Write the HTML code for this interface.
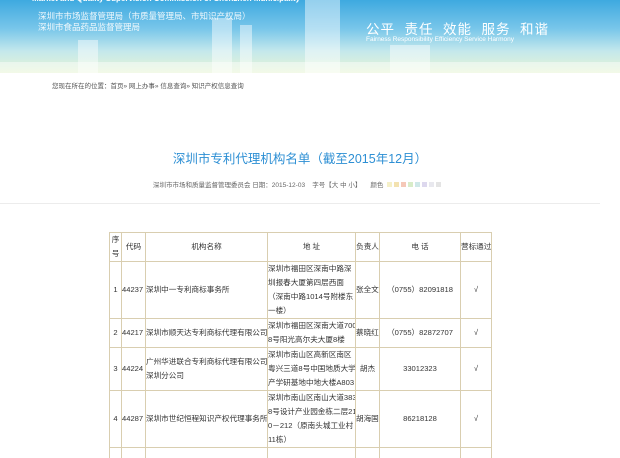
<!DOCTYPE html>
<html><head><meta charset="utf-8"><style>
*{margin:0;padding:0;box-sizing:border-box}
html,body{width:620px;height:458px;overflow:hidden}
body{background:#fff;font-family:"Liberation Sans","Noto Sans CJK SC",sans-serif;position:relative}
.hd{position:absolute;left:0;top:0;width:620px;height:73px;background:linear-gradient(180deg,#3ea9e0 0%,#7ac7ea 40%,#c4e8ec 70%,#e8f5d4 100%);overflow:hidden}
.hd .b{position:absolute;background:rgba(255,255,255,.45)}
.t0{position:absolute;left:32px;top:-6px;color:#fff;font-size:8px;font-weight:bold;white-space:nowrap}
.t1{position:absolute;left:38px;top:11px;color:#fff;font-size:8.5px;line-height:11px;opacity:.9;white-space:nowrap}
.t2{position:absolute;left:366px;top:18px;color:#fff;font-size:13.5px;letter-spacing:1px;white-space:nowrap}
.t3{position:absolute;left:366px;top:36px;color:#fff;font-size:6.5px;white-space:nowrap}
.bc{position:absolute;left:52px;top:80px;font-size:6.5px;color:#555;white-space:nowrap}
.title{position:absolute;left:0;width:600px;top:148px;text-align:center;font-size:12.5px;color:#2d8fd4}
.meta{position:absolute;left:153px;top:179px;font-size:6.5px;color:#666;white-space:nowrap}
.sw{display:inline-block;width:5px;height:5px;margin-right:2px}
.sep{position:absolute;left:0;top:203px;width:600px;height:1px;background:#ececec}
table{position:absolute;left:109px;top:232px;width:382px;table-layout:fixed;border-collapse:collapse;font-size:7.6px;color:#333}
td{border:1px solid #d9ceb0;line-height:14px;vertical-align:middle;padding:0;overflow:hidden;white-space:nowrap}
.c{text-align:center}
</style></head><body>
<div class="hd">
<div class="b" style="left:305px;top:0;width:35px;height:73px"></div>
<div class="b" style="left:212px;top:18px;width:20px;height:55px"></div>
<div class="b" style="left:240px;top:25px;width:12px;height:48px"></div>
<div class="b" style="left:78px;top:40px;width:20px;height:33px"></div>
<div class="b" style="left:390px;top:45px;width:40px;height:28px"></div>
<div class="b" style="left:0;top:62px;width:620px;height:11px"></div>
<div class="t0">Market and Quality Supervision Commission of Shenzhen Municipality</div>
<div class="t1">深圳市市场监督管理局（市质量管理局、市知识产权局）<br>深圳市食品药品监督管理局</div>
<div class="t2">公平 &nbsp;责任 &nbsp;效能 &nbsp;服务 &nbsp;和谐</div>
<div class="t3">Fairness Responsibility Efficiency Service Harmony</div>
</div>
<div class="bc">您现在所在的位置：首页» 网上办事» 信息查询» 知识产权信息查询</div>
<div class="title">深圳市专利代理机构名单（截至2015年12月）</div>
<div class="meta">深圳市市场和质量监督管理委员会 日期：2015-12-03 &nbsp;&nbsp; 字号【大 中 小】 &nbsp;&nbsp;&nbsp; 颜色 &nbsp;<span class="sw" style="background:#f5f0c8"></span><span class="sw" style="background:#f3e2b0"></span><span class="sw" style="background:#f5c8b8"></span><span class="sw" style="background:#d8ecc8"></span><span class="sw" style="background:#cfe8e8"></span><span class="sw" style="background:#ddd8ee"></span><span class="sw" style="background:#e8e8ee"></span><span class="sw" style="background:#e4e4e4"></span></div>
<div class="sep"></div>
<table>
<colgroup><col style="width:12px"><col style="width:24px"><col style="width:122px"><col style="width:88px"><col style="width:24px"><col style="width:81px"><col style="width:31px"></colgroup>
<tr style="height:29px"><td class="c">序<br>号</td><td class="c">代码</td><td class="c">机构名称</td><td class="c">地 址</td><td class="c">负责人</td><td class="c">电 话</td><td class="c">营标通过</td></tr>
<tr style="height:56px"><td class="c">1</td><td>44237</td><td>深圳中一专利商标事务所</td><td>深圳市福田区深南中路深<br>圳报春大厦第四层西面<br>（深南中路1014号附楼东<br>一楼）</td><td>张全文</td><td class="c">（0755）82091818</td><td class="c">√</td></tr>
<tr style="height:28px"><td class="c">2</td><td>44217</td><td>深圳市顺天达专利商标代理有限公司</td><td>深圳市福田区深南大道700<br>8号阳光高尔夫大厦8楼</td><td>蔡晓红</td><td class="c">（0755）82872707</td><td class="c">√</td></tr>
<tr style="height:43px"><td class="c">3</td><td>44224</td><td>广州华进联合专利商标代理有限公司<br>深圳分公司</td><td>深圳市南山区高新区南区<br>粤兴三道8号中国地质大学<br>产学研基地中地大楼A803</td><td class="c">胡杰</td><td class="c">33012323</td><td class="c">√</td></tr>
<tr style="height:57px"><td class="c">4</td><td>44287</td><td>深圳市世纪恒程知识产权代理事务所</td><td>深圳市南山区南山大道383<br>8号设计产业园金栋二层21<br>0－212（原南头城工业村<br>11栋）</td><td>胡海国</td><td class="c">86218128</td><td class="c">√</td></tr>
<tr style="height:30px"><td></td><td></td><td></td><td>深圳市福田区金田路与福</td><td></td><td></td><td></td></tr>
</table>
</body></html>
